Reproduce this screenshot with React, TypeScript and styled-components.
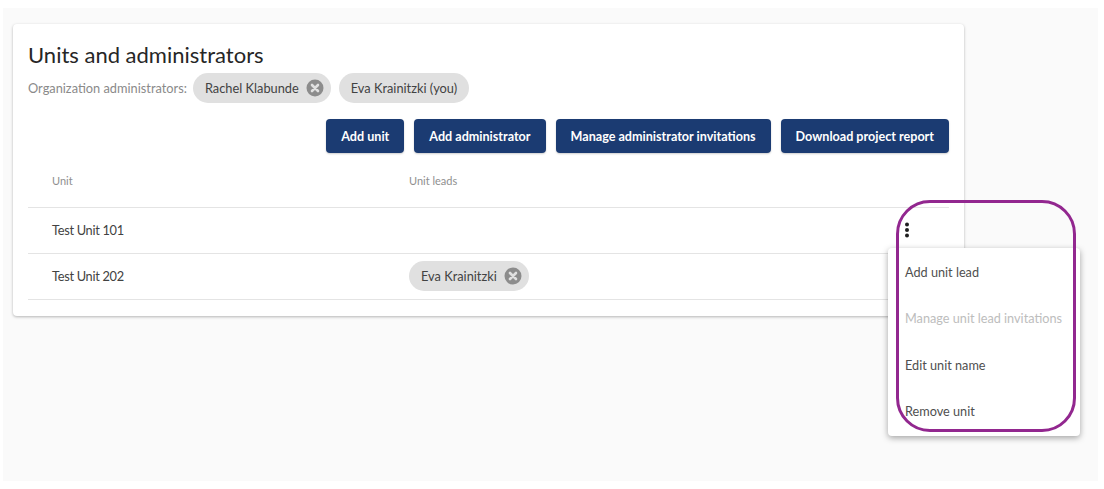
import styled, { createGlobalStyle } from "styled-components";

const GlobalStyle = createGlobalStyle`
  html, body {
    margin: 0;
    background: #ffffff;
  }
  body {
    font-family: "Lato", "Noto Sans", sans-serif;
    color: #3d3d3d;
  }
`;

const Page = styled.div`
  position: relative;
  box-sizing: border-box;
  width: 1095px;
  height: 473px;
  margin: 8px 0 0 3px;
  padding: 16px 134px 0 10px;
  background: #fafafa;
`;

const Card = styled.section`
  box-sizing: border-box;
  height: 292px;
  padding: 15px 15px 0;
  background: #ffffff;
  border-radius: 4px;
  box-shadow: 0 1px 3px rgba(0, 0, 0, 0.28);
`;

const Title = styled.h1`
  margin: 0;
  font-size: 22px;
  line-height: 32px;
  font-weight: 400;
  color: #262626;
`;

const AdminRow = styled.div`
  display: flex;
  align-items: center;
  height: 30px;
  margin-top: 2px;
`;

const AdminLabel = styled.span`
  margin-right: 6px;
  font-size: 12.8px;
  color: #8a8a8a;
`;

const Chip = styled.span`
  display: inline-flex;
  align-items: center;
  box-sizing: border-box;
  height: 30px;
  padding: 0 7px 0 12px;
  margin-right: 8px;
  border-radius: 15px;
  background: #e0e0e0;
  font-size: 12.8px;
  color: #424242;
`;

const PlainChip = styled(Chip)`
  padding: 0 12px;
`;

const ChipClose = styled.svg`
  width: 18px;
  height: 18px;
  margin-left: 7px;
`;

const Actions = styled.div`
  display: flex;
  justify-content: flex-end;
  gap: 10px;
  margin-top: 16px;
`;

const Button = styled.button`
  height: 34px;
  padding: 0 15px;
  border: 0;
  border-radius: 4px;
  background: #1b3b72;
  color: #ffffff;
  font-family: inherit;
  font-size: 12.6px;
  font-weight: 700;
  box-shadow: 0 1px 2px rgba(0, 0, 0, 0.2);
`;

const HeadRow = styled.div`
  display: grid;
  grid-template-columns: 357px 1fr;
  align-items: center;
  box-sizing: border-box;
  height: 38px;
  margin-top: 17px;
  padding: 0 0 17px 24px;
  border-bottom: 1px solid #e4e4e4;
  font-size: 11px;
  color: #8f8f8f;
`;

const Row = styled.div`
  display: grid;
  grid-template-columns: 357px 1fr 24px;
  align-items: center;
  box-sizing: border-box;
  height: 46px;
  padding: 0 30px 2px 24px;
  border-bottom: 1px solid #e4e4e4;
  font-size: 12.8px;
  color: #424242;
`;

const UnitName = styled.span`
  letter-spacing: -0.3px;
`;

const Kebab = styled.svg`
  width: 6px;
  height: 16px;
  justify-self: center;
`;

const Menu = styled.ul`
  position: absolute;
  left: 885px;
  top: 240px;
  width: 192px;
  height: 188px;
  margin: 0;
  padding: 1px 0 2px;
  box-sizing: border-box;
  list-style: none;
  display: flex;
  flex-direction: column;
  background: #ffffff;
  border-radius: 4px;
  box-shadow: 0 2px 6px rgba(0, 0, 0, 0.35);
`;

const MenuItem = styled.li<{ $disabled?: boolean }>`
  flex: 1;
  display: flex;
  align-items: center;
  padding-left: 17px;
  font-size: 12.7px;
  color: ${(p) => (p.$disabled ? "#bdbdbd" : "#4f4f4f")};
`;

const Highlight = styled.div`
  position: absolute;
  left: 893px;
  top: 192px;
  width: 180px;
  height: 232px;
  box-sizing: border-box;
  border: 3px solid #92278f;
  border-radius: 34px;
  pointer-events: none;
`;

const CloseIcon = () => (
  <ChipClose viewBox="0 0 18 18">
    <circle cx="9" cy="9" r="8.5" fill="#8c8c8c" />
    <path d="M6 6l6 6M12 6l-6 6" stroke="#e0e0e0" strokeWidth="2.6" strokeLinecap="round" />
  </ChipClose>
);

const App = () => {
  return (
    <>
      <GlobalStyle />
      <Page>
        <Card>
          <Title>Units and administrators</Title>
          <AdminRow>
            <AdminLabel>Organization administrators:</AdminLabel>
            <Chip>
              Rachel Klabunde
              <CloseIcon />
            </Chip>
            <PlainChip>Eva Krainitzki (you)</PlainChip>
          </AdminRow>
          <Actions>
            <Button>Add unit</Button>
            <Button>Add administrator</Button>
            <Button>Manage administrator invitations</Button>
            <Button>Download project report</Button>
          </Actions>
          <HeadRow>
            <span>Unit</span>
            <span>Unit leads</span>
          </HeadRow>
          <Row>
            <UnitName>Test Unit 101</UnitName>
            <span />
            <Kebab viewBox="0 0 6 16">
              <circle cx="3" cy="2.5" r="2" fill="#1f1f1f" />
              <circle cx="3" cy="8" r="2" fill="#1f1f1f" />
              <circle cx="3" cy="13.5" r="2" fill="#1f1f1f" />
            </Kebab>
          </Row>
          <Row>
            <UnitName>Test Unit 202</UnitName>
            <span>
              <Chip>
                Eva Krainitzki
                <CloseIcon />
              </Chip>
            </span>
          </Row>
        </Card>
        <Menu>
          <MenuItem>Add unit lead</MenuItem>
          <MenuItem $disabled>Manage unit lead invitations</MenuItem>
          <MenuItem>Edit unit name</MenuItem>
          <MenuItem>Remove unit</MenuItem>
        </Menu>
        <Highlight />
      </Page>
    </>
  );
};

export default App;
